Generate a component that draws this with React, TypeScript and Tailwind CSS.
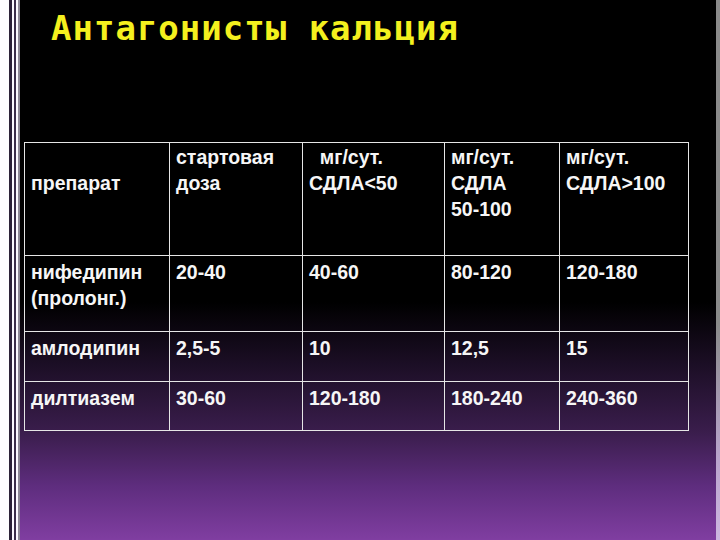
import React from 'react';

const bodyRows = [
  { name: ['нифедипин', '(пролонг.)'], vals: ['20-40', '40-60', '80-120', '120-180'], h: 'h-[76px]' },
  { name: ['амлодипин'], vals: ['2,5-5', '10', '12,5', '15'], h: 'h-[50px]' },
  { name: ['дилтиазем'], vals: ['30-60', '120-180', '180-240', '240-360'], h: 'h-[49px]' },
];

const headers: string[][] = [
  ['стартовая', 'доза'],
  ['  мг/сут.', 'СДЛА<50'],
  ['мг/сут.', 'СДЛА', '50-100'],
  ['мг/сут.', 'СДЛА>100'],
];

const colWidths = ['w-[145px]', 'w-[133px]', 'w-[142px]', 'w-[115px]', 'w-[129px]'];

function Lines({ lines }: { lines: string[] }) {
  return (
    <>
      {lines.map((l, i) => (
        <div key={i} className="whitespace-pre">
          {l}
        </div>
      ))}
    </>
  );
}

export default function App() {
  return (
    <div className="w-[720px] h-[540px] flex bg-white overflow-hidden">
      {/* left edge stripes */}
      <div className="flex h-full shrink-0">
        <div className="w-[9px] bg-[#fdfbff]" />
        <div className="w-[3px] bg-[#2b1f38]" />
        <div className="w-[2px] bg-[#fbf8ff]" />
        <div className="w-[2px] bg-[#3b2c4a]" />
        <div className="w-[2px] bg-[#fbf8ff]" />
        <div className="w-[2px] bg-[#8d8796]" />
      </div>

      <div className="flex-1 h-full flex flex-col bg-[linear-gradient(to_bottom,#000_0%,#000_56%,#1d0f27_68%,#3a1d4c_80%,#5e2d7e_90%,#803ea1_100%)]">
        <h1 className="pl-[31px] pt-[11px] text-[34px] leading-[34px] font-bold tracking-[1px] text-[#f4f01e] font-['DejaVu_Sans_Mono',monospace] whitespace-pre">
          Антагонисты кальция
        </h1>

        <table className="mt-[97px] ml-[4px] w-[665px] table-fixed border-collapse text-[19.5px] leading-[26px] font-bold text-[#f6f6f6] font-['Liberation_Sans',Arial,sans-serif]">
          <colgroup>
            {colWidths.map((w, i) => (
              <col key={i} className={w} />
            ))}
          </colgroup>
          <tbody>
            <tr className="h-[113px]">
              <td className="border border-[#e6e6e6] align-top px-[6px] pt-[27px]">препарат</td>
              {headers.map((h, i) => (
                <td key={i} className="border border-[#e6e6e6] align-top px-[6px] pt-[1px]">
                  <Lines lines={h} />
                </td>
              ))}
            </tr>
            {bodyRows.map((r, ri) => (
              <tr key={ri} className={r.h}>
                <td className="border border-[#e6e6e6] align-top px-[6px] pt-[3px]">
                  <Lines lines={r.name} />
                </td>
                {r.vals.map((v, vi) => (
                  <td key={vi} className="border border-[#e6e6e6] align-top px-[6px] pt-[3px]">
                    {v}
                  </td>
                ))}
              </tr>
            ))}
          </tbody>
        </table>
      </div>

      {/* right edge strip */}
      <div className="w-[4px] h-full shrink-0 bg-[linear-gradient(to_bottom,#8a8a8a_0%,#8a8a8a_60%,#b9a4cc_85%,#cdb7e0_100%)]" />
    </div>
  );
}
